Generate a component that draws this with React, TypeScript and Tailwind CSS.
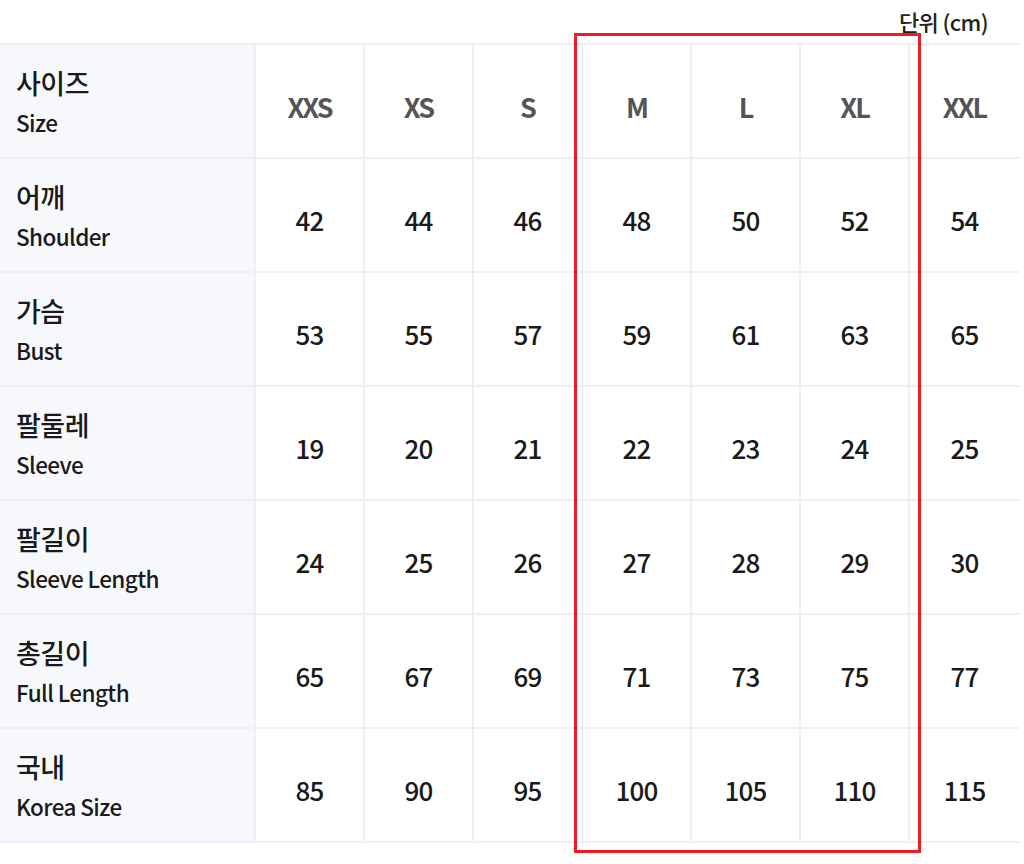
import React from "react";

const sizes = ["XXS", "XS", "S", "M", "L", "XL", "XXL"];
const rows: { ko: string; en: string; vals: number[] }[] = [
  { ko: "어깨", en: "Shoulder", vals: [42, 44, 46, 48, 50, 52, 54] },
  { ko: "가슴", en: "Bust", vals: [53, 55, 57, 59, 61, 63, 65] },
  { ko: "팔둘레", en: "Sleeve", vals: [19, 20, 21, 22, 23, 24, 25] },
  { ko: "팔길이", en: "Sleeve Length", vals: [24, 25, 26, 27, 28, 29, 30] },
  { ko: "총길이", en: "Full Length", vals: [65, 67, 69, 71, 73, 75, 77] },
  { ko: "국내", en: "Korea Size", vals: [85, 90, 95, 100, 105, 110, 115] },
];

function Label({ ko, en }: { ko: string; en: string }) {
  return (
    <div className="h-[114px] bg-[#f7f8fc] border-b-2 border-r-2 border-[#eeeff2] flex flex-col justify-center pl-4 pt-[2px]">
      <div className="text-[27px] leading-[40px] font-medium text-[#1a1a1a] tracking-[-0.5px]">{ko}</div>
      <div className="text-[22.5px] leading-[38px] font-medium text-[#1a1a1a] tracking-[-0.6px]">{en}</div>
    </div>
  );
}

export default function App() {
  return (
    <div
      className="relative w-[1024px] h-[864px] bg-white overflow-hidden"
      style={{ fontFamily: '"Noto Sans CJK KR", "Noto Sans", sans-serif' }}
    >
      <div className="h-[43px] flex justify-end items-end pr-[36px] pb-[7px]">
        <span className="text-[22px] leading-[30px] font-medium text-[#222] tracking-[-0.6px]">단위 (cm)</span>
      </div>
      <div className="grid grid-cols-[256px_repeat(7,109px)] border-t-2 border-[#eeeff2] w-[1019px]">
        <Label ko="사이즈" en="Size" />
        {sizes.map((s, i) => (
          <div
            key={s}
            className={`h-[114px] border-b-2 border-[#eeeff2] ${i < 6 ? "border-r-2" : ""} flex items-center justify-center pt-[12px]`}
          >
            <span className="text-[27px] font-bold text-[#555] tracking-[-2px]">{s}</span>
          </div>
        ))}
        {rows.map((r) => (
          <React.Fragment key={r.en}>
            <Label ko={r.ko} en={r.en} />
            {r.vals.map((v, i) => (
              <div
                key={i}
                className={`h-[114px] border-b-2 border-[#eeeff2] ${i < 6 ? "border-r-2" : ""} flex items-center justify-center pt-[8px]`}
              >
                <span className="text-[26px] font-medium text-[#1a1a1a] tracking-[-0.8px]">{v}</span>
              </div>
            ))}
          </React.Fragment>
        ))}
      </div>
      <div className="absolute left-[574px] top-[33px] w-[347px] h-[820px] border-[3px] border-[#ee1c25]" />
    </div>
  );
}
